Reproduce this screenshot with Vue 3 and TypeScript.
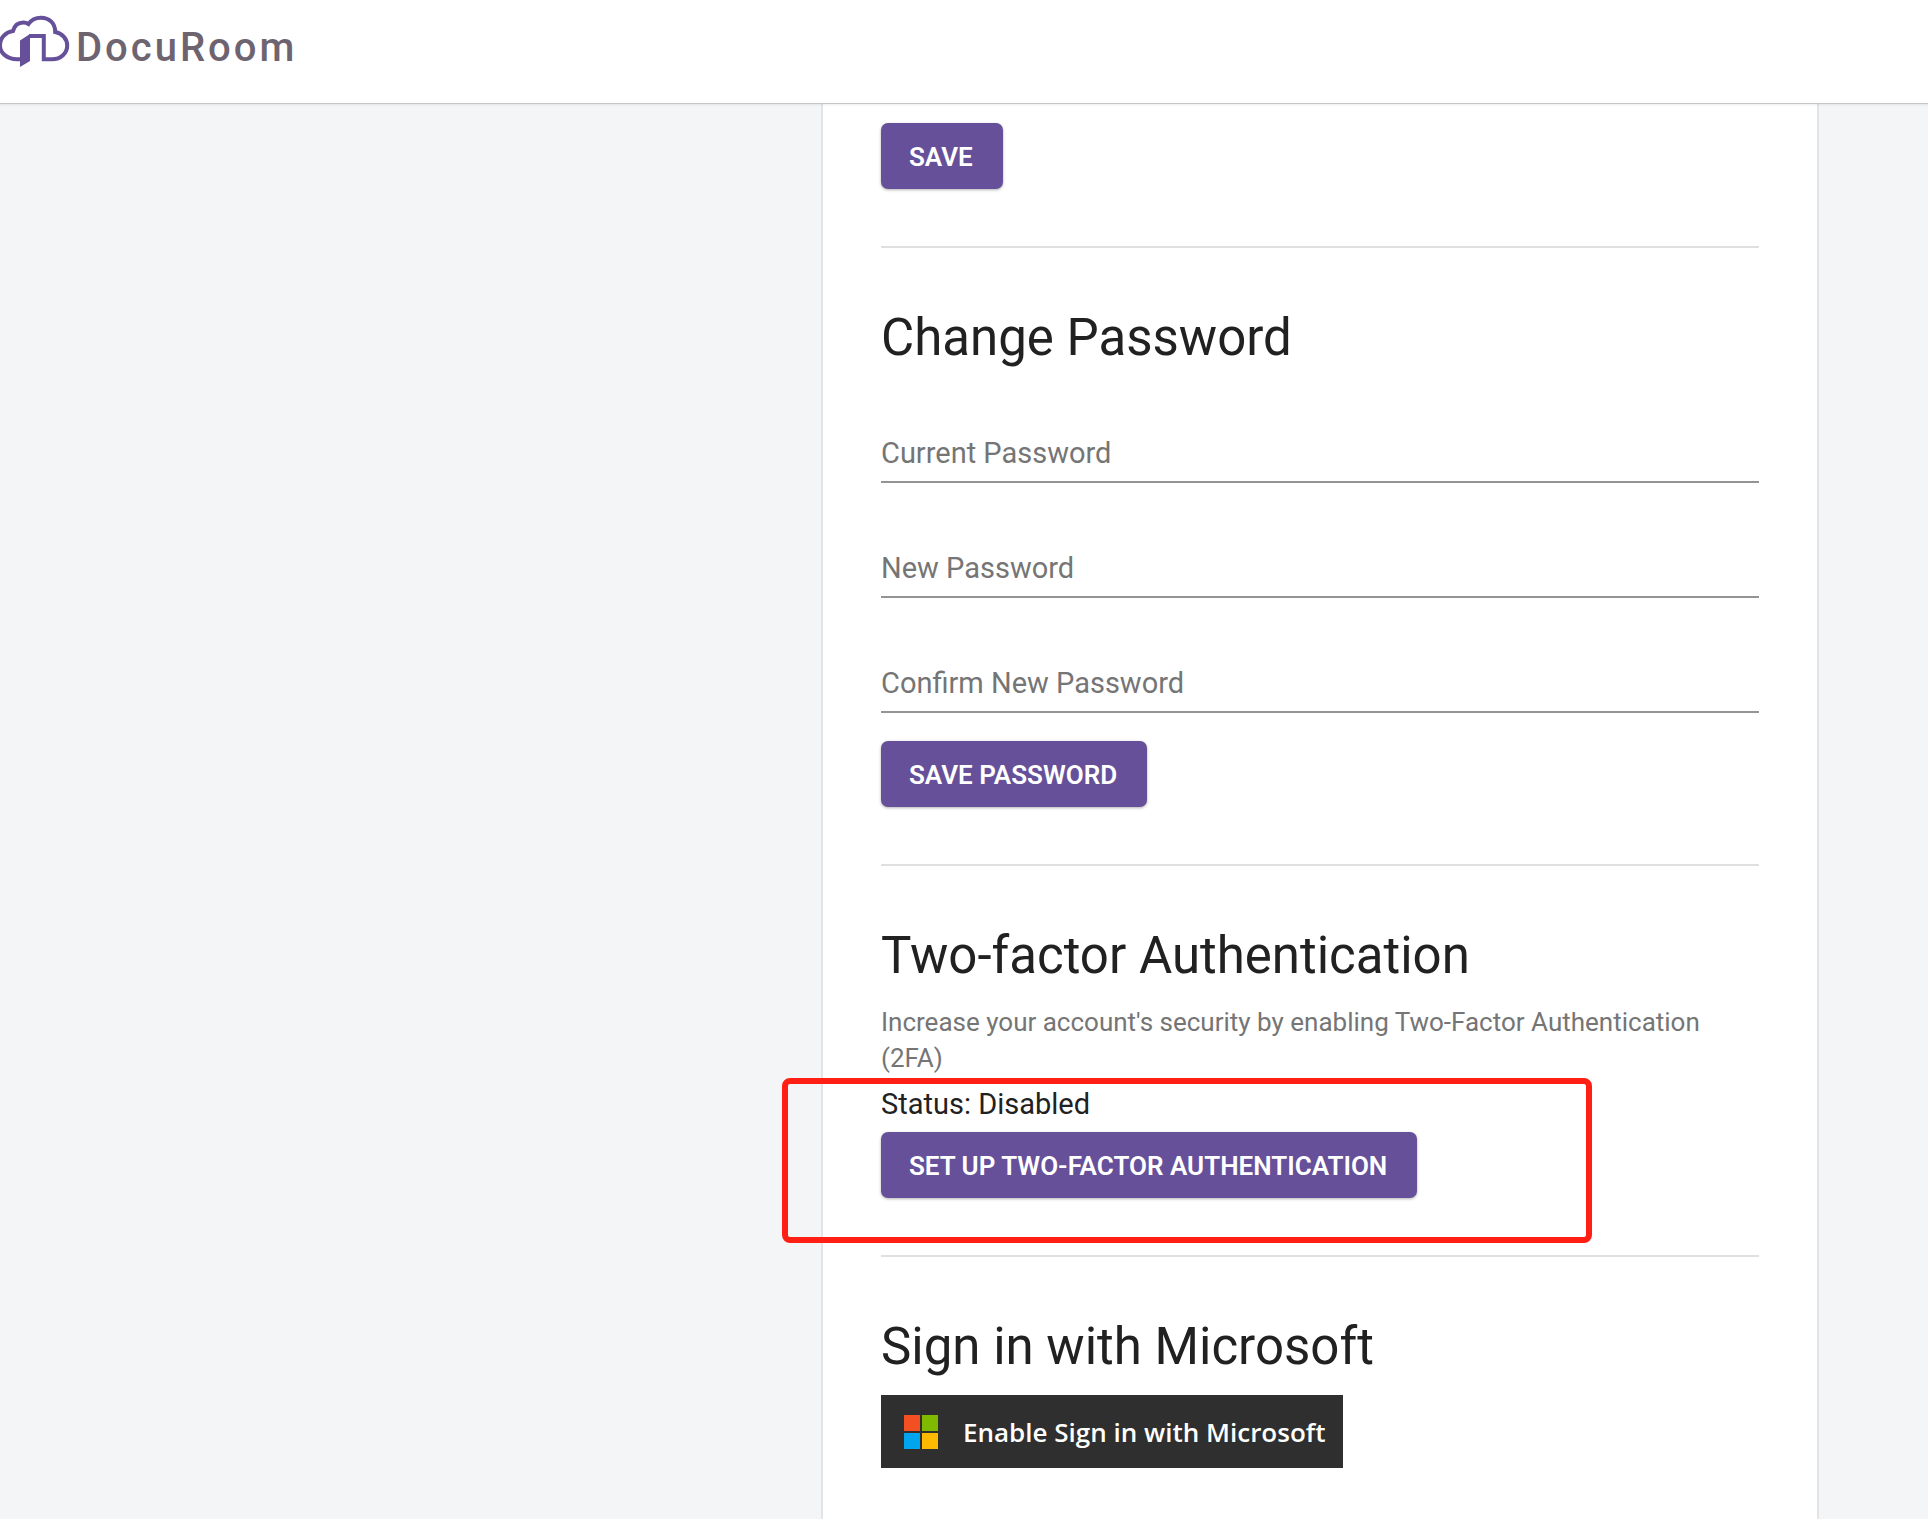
<script setup lang="ts">
import { reactive } from 'vue'

interface PasswordField {
  id: 'current' | 'next' | 'confirm'
  label: string
  autocomplete: string
}

const fields: PasswordField[] = [
  { id: 'current', label: 'Current Password', autocomplete: 'current-password' },
  { id: 'next', label: 'New Password', autocomplete: 'new-password' },
  { id: 'confirm', label: 'Confirm New Password', autocomplete: 'new-password' },
]

const values = reactive({ current: '', next: '', confirm: '' })
</script>

<template>
  <div class="page">
    <header class="topbar">
      <a class="brand" href="#">
        <svg class="brand-mark" viewBox="0 0 72 70" aria-hidden="true">
          <path
            d="M20 59.200H17C7 59 0 53 0 45.500C0 37.500 6 32 13 31C14.500 25 19 22.500 23.500 22.500C25.500 22.500 27 23 28.500 24C31.500 19.500 36 17.700 41 17.700C49.500 17.700 55.200 23.500 55.200 32C62.500 33.500 67.200 39 67.200 45.500C67.200 53 61 59.200 52 59.200H43.800V36H29"
            fill="none"
            stroke="#66509a"
            stroke-width="4"
          />
          <path d="M20 40.500L30 34V61L20 67Z" fill="#66509a" />
        </svg>
        <span class="brand-name">DocuRoom</span>
      </a>
    </header>

    <main class="layout">
      <div class="panel">
        <section class="section">
          <button class="btn" type="button">SAVE</button>
        </section>

        <section class="section">
          <h2 class="title">Change Password</h2>
          <form @submit.prevent>
            <div v-for="f in fields" :key="f.id" class="field">
              <label v-show="!values[f.id]" :for="f.id">{{ f.label }}</label>
              <input :id="f.id" v-model="values[f.id]" type="password" :autocomplete="f.autocomplete" />
            </div>
            <button class="btn form-btn" type="submit">SAVE PASSWORD</button>
          </form>
        </section>

        <section class="section">
          <h2 class="title">Two-factor Authentication</h2>
          <p class="hint">
            Increase your account's security by enabling Two-Factor Authentication (2FA)
          </p>
          <div class="status-group">
            <p class="status">Status: Disabled</p>
            <button class="btn" type="button">SET UP TWO-FACTOR AUTHENTICATION</button>
            <div class="marker" aria-hidden="true"></div>
          </div>
        </section>

        <section class="section">
          <h2 class="title">Sign in with Microsoft</h2>
          <button class="ms-btn" type="button">
            <svg class="ms-logo" viewBox="0 0 36 36" aria-hidden="true">
              <rect x="1" y="1" width="16" height="16" fill="#f25022" />
              <rect x="19" y="1" width="16" height="16" fill="#7fba00" />
              <rect x="1" y="19" width="16" height="16" fill="#00a4ef" />
              <rect x="19" y="19" width="16" height="16" fill="#ffb900" />
            </svg>
            <span>Enable Sign in with Microsoft</span>
          </button>
        </section>
      </div>
    </main>
  </div>
</template>

<style>
body {
  margin: 0;
  background: #f4f5f7;
}
</style>

<style scoped>
.page {
  display: flex;
  flex-direction: column;
  min-height: 100vh;
  font-family: Roboto, "Liberation Sans", sans-serif;
  color: #212121;
}

.topbar {
  position: relative;
  height: 103px;
  background: #fff;
  border-bottom: 1px solid #c6c7c9;
  box-shadow: 0 1px 2px rgba(0, 0, 0, 0.08);
}

.brand {
  display: flex;
  align-items: flex-start;
  gap: 4px;
  width: max-content;
  color: #6e6470;
  text-decoration: none;
}

.brand-mark {
  width: 72px;
  height: 70px;
}

.brand-name {
  padding-top: 24px;
  font-size: 40px;
  line-height: 48px;
  font-weight: 500;
  letter-spacing: 3px;
}

.layout {
  flex: 1;
  display: grid;
  grid-template-columns: 821px minmax(0, 1fr) 109px;
}

.panel {
  grid-column: 2;
  padding: 19px 58px 0;
  background: #fff;
  border: 2px solid #e3e4e6;
  border-width: 0 2px;
}

.section {
  padding-bottom: 57px;
  border-bottom: 2px solid #e0e0e0;
}

.section + .section {
  padding-top: 60px;
}

.section:last-child {
  padding-bottom: 44px;
  border-bottom: 0;
}

.title {
  margin: 0;
  font-size: 51px;
  line-height: 60px;
  font-weight: 400;
}

.btn {
  display: block;
  height: 66px;
  padding: 1px 30px 0 28px;
  border: 0;
  border-radius: 7px;
  background: #66509a;
  box-shadow: 0 1px 3px rgba(0, 0, 0, 0.3);
  color: #fff;
  font: 600 26px/44px Roboto, "Liberation Sans", sans-serif;
}

.form-btn {
  margin-top: 28px;
}

.field {
  display: grid;
  padding-top: 55px;
}

.field label,
.field input {
  grid-area: 1 / 1;
  height: 58px;
  font: 400 29px/60px Roboto, "Liberation Sans", sans-serif;
}

.field label {
  color: #757575;
}

.field input {
  padding: 0;
  border: 0;
  border-bottom: 2px solid #949494;
  outline: 0;
  background: transparent;
}

.hint {
  margin: 18px 0 0;
  color: #757575;
  font-size: 26px;
  line-height: 36px;
}

.status-group {
  position: relative;
  padding-top: 8px;
}

.status {
  margin: 0 0 8px;
  font-size: 29px;
  line-height: 40px;
}

.marker {
  position: absolute;
  top: 2px;
  left: -99px;
  width: 798px;
  height: 153px;
  border: 6px solid #ff1f14;
  border-radius: 8px;
  pointer-events: none;
}

.ms-btn {
  display: flex;
  align-items: center;
  gap: 24px;
  height: 73px;
  margin-top: 18px;
  padding: 0 18px 0 22px;
  border: 0;
  background: #2f2f2f;
  color: #fff;
  font: 600 26px/36px "Open Sans", "Noto Sans", sans-serif;
}

.ms-logo {
  width: 36px;
  height: 36px;
}
</style>
